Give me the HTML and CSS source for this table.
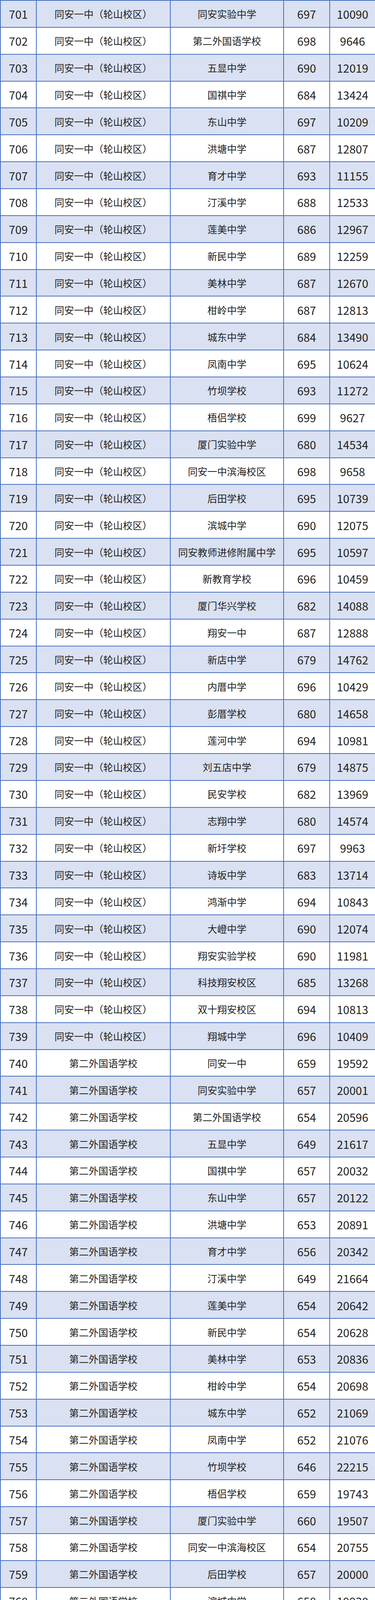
FILE: index.html
```html
<!DOCTYPE html>
<html lang="zh-CN">
<head>
<meta charset="utf-8">
<title>录取名单</title>
<link rel="stylesheet" href="styles.css">
</head>
<body>
<table class="sheet">
<colgroup>
<col class="c-no"><col class="c-from"><col class="c-to"><col class="c-score"><col class="c-rank">
</colgroup>
<tbody>
<tr><td>701</td><td>同安一中（轮山校区）</td><td>同安实验中学</td><td>697</td><td>10090</td></tr>
<tr><td>702</td><td>同安一中（轮山校区）</td><td>第二外国语学校</td><td>698</td><td>9646</td></tr>
<tr><td>703</td><td>同安一中（轮山校区）</td><td>五显中学</td><td>690</td><td>12019</td></tr>
<tr><td>704</td><td>同安一中（轮山校区）</td><td>国祺中学</td><td>684</td><td>13424</td></tr>
<tr><td>705</td><td>同安一中（轮山校区）</td><td>东山中学</td><td>697</td><td>10209</td></tr>
<tr><td>706</td><td>同安一中（轮山校区）</td><td>洪塘中学</td><td>687</td><td>12807</td></tr>
<tr><td>707</td><td>同安一中（轮山校区）</td><td>育才中学</td><td>693</td><td>11155</td></tr>
<tr><td>708</td><td>同安一中（轮山校区）</td><td>汀溪中学</td><td>688</td><td>12533</td></tr>
<tr><td>709</td><td>同安一中（轮山校区）</td><td>莲美中学</td><td>686</td><td>12967</td></tr>
<tr><td>710</td><td>同安一中（轮山校区）</td><td>新民中学</td><td>689</td><td>12259</td></tr>
<tr><td>711</td><td>同安一中（轮山校区）</td><td>美林中学</td><td>687</td><td>12670</td></tr>
<tr><td>712</td><td>同安一中（轮山校区）</td><td>柑岭中学</td><td>687</td><td>12813</td></tr>
<tr><td>713</td><td>同安一中（轮山校区）</td><td>城东中学</td><td>684</td><td>13490</td></tr>
<tr><td>714</td><td>同安一中（轮山校区）</td><td>凤南中学</td><td>695</td><td>10624</td></tr>
<tr><td>715</td><td>同安一中（轮山校区）</td><td>竹坝学校</td><td>693</td><td>11272</td></tr>
<tr><td>716</td><td>同安一中（轮山校区）</td><td>梧侣学校</td><td>699</td><td>9627</td></tr>
<tr><td>717</td><td>同安一中（轮山校区）</td><td>厦门实验中学</td><td>680</td><td>14534</td></tr>
<tr><td>718</td><td>同安一中（轮山校区）</td><td>同安一中滨海校区</td><td>698</td><td>9658</td></tr>
<tr><td>719</td><td>同安一中（轮山校区）</td><td>后田学校</td><td>695</td><td>10739</td></tr>
<tr><td>720</td><td>同安一中（轮山校区）</td><td>滨城中学</td><td>690</td><td>12075</td></tr>
<tr><td>721</td><td>同安一中（轮山校区）</td><td>同安教师进修附属中学</td><td>695</td><td>10597</td></tr>
<tr><td>722</td><td>同安一中（轮山校区）</td><td>新教育学校</td><td>696</td><td>10459</td></tr>
<tr><td>723</td><td>同安一中（轮山校区）</td><td>厦门华兴学校</td><td>682</td><td>14088</td></tr>
<tr><td>724</td><td>同安一中（轮山校区）</td><td>翔安一中</td><td>687</td><td>12888</td></tr>
<tr><td>725</td><td>同安一中（轮山校区）</td><td>新店中学</td><td>679</td><td>14762</td></tr>
<tr><td>726</td><td>同安一中（轮山校区）</td><td>内厝中学</td><td>696</td><td>10429</td></tr>
<tr><td>727</td><td>同安一中（轮山校区）</td><td>彭厝学校</td><td>680</td><td>14658</td></tr>
<tr><td>728</td><td>同安一中（轮山校区）</td><td>莲河中学</td><td>694</td><td>10981</td></tr>
<tr><td>729</td><td>同安一中（轮山校区）</td><td>刘五店中学</td><td>679</td><td>14875</td></tr>
<tr><td>730</td><td>同安一中（轮山校区）</td><td>民安学校</td><td>682</td><td>13969</td></tr>
<tr><td>731</td><td>同安一中（轮山校区）</td><td>志翔中学</td><td>680</td><td>14574</td></tr>
<tr><td>732</td><td>同安一中（轮山校区）</td><td>新圩学校</td><td>697</td><td>9963</td></tr>
<tr><td>733</td><td>同安一中（轮山校区）</td><td>诗坂中学</td><td>683</td><td>13714</td></tr>
<tr><td>734</td><td>同安一中（轮山校区）</td><td>鸿渐中学</td><td>694</td><td>10843</td></tr>
<tr><td>735</td><td>同安一中（轮山校区）</td><td>大嶝中学</td><td>690</td><td>12074</td></tr>
<tr><td>736</td><td>同安一中（轮山校区）</td><td>翔安实验学校</td><td>690</td><td>11981</td></tr>
<tr><td>737</td><td>同安一中（轮山校区）</td><td>科技翔安校区</td><td>685</td><td>13268</td></tr>
<tr><td>738</td><td>同安一中（轮山校区）</td><td>双十翔安校区</td><td>694</td><td>10813</td></tr>
<tr><td>739</td><td>同安一中（轮山校区）</td><td>翔城中学</td><td>696</td><td>10409</td></tr>
<tr><td>740</td><td>第二外国语学校</td><td>同安一中</td><td>659</td><td>19592</td></tr>
<tr><td>741</td><td>第二外国语学校</td><td>同安实验中学</td><td>657</td><td>20001</td></tr>
<tr><td>742</td><td>第二外国语学校</td><td>第二外国语学校</td><td>654</td><td>20596</td></tr>
<tr><td>743</td><td>第二外国语学校</td><td>五显中学</td><td>649</td><td>21617</td></tr>
<tr><td>744</td><td>第二外国语学校</td><td>国祺中学</td><td>657</td><td>20032</td></tr>
<tr><td>745</td><td>第二外国语学校</td><td>东山中学</td><td>657</td><td>20122</td></tr>
<tr><td>746</td><td>第二外国语学校</td><td>洪塘中学</td><td>653</td><td>20891</td></tr>
<tr><td>747</td><td>第二外国语学校</td><td>育才中学</td><td>656</td><td>20342</td></tr>
<tr><td>748</td><td>第二外国语学校</td><td>汀溪中学</td><td>649</td><td>21664</td></tr>
<tr><td>749</td><td>第二外国语学校</td><td>莲美中学</td><td>654</td><td>20642</td></tr>
<tr><td>750</td><td>第二外国语学校</td><td>新民中学</td><td>654</td><td>20628</td></tr>
<tr><td>751</td><td>第二外国语学校</td><td>美林中学</td><td>653</td><td>20836</td></tr>
<tr><td>752</td><td>第二外国语学校</td><td>柑岭中学</td><td>654</td><td>20698</td></tr>
<tr><td>753</td><td>第二外国语学校</td><td>城东中学</td><td>652</td><td>21069</td></tr>
<tr><td>754</td><td>第二外国语学校</td><td>凤南中学</td><td>652</td><td>21076</td></tr>
<tr><td>755</td><td>第二外国语学校</td><td>竹坝学校</td><td>646</td><td>22215</td></tr>
<tr><td>756</td><td>第二外国语学校</td><td>梧侣学校</td><td>659</td><td>19743</td></tr>
<tr><td>757</td><td>第二外国语学校</td><td>厦门实验中学</td><td>660</td><td>19507</td></tr>
<tr><td>758</td><td>第二外国语学校</td><td>同安一中滨海校区</td><td>654</td><td>20755</td></tr>
<tr><td>759</td><td>第二外国语学校</td><td>后田学校</td><td>657</td><td>20000</td></tr>
<tr><td>760</td><td>第二外国语学校</td><td>滨城中学</td><td>658</td><td>19930</td></tr>
<tr><td>761</td><td>第二外国语学校</td><td>同安教师进修附属中学</td><td>657</td><td>20082</td></tr>
<tr><td>762</td><td>第二外国语学校</td><td>新教育学校</td><td>654</td><td>20707</td></tr>
<tr><td>763</td><td>第二外国语学校</td><td>厦门华兴学校</td><td>660</td><td>19513</td></tr>
<tr><td>764</td><td>第二外国语学校</td><td>翔安一中</td><td>655</td><td>20469</td></tr>
<tr><td>765</td><td>第二外国语学校</td><td>新店中学</td><td>649</td><td>21651</td></tr>
<tr><td>766</td><td>第二外国语学校</td><td>内厝中学</td><td>655</td><td>20474</td></tr>
<tr><td>767</td><td>第二外国语学校</td><td>彭厝学校</td><td>652</td><td>20993</td></tr>
<tr><td>768</td><td>第二外国语学校</td><td>莲河中学</td><td>653</td><td>20815</td></tr>
<tr><td>769</td><td>第二外国语学校</td><td>刘五店中学</td><td>641</td><td>23225</td></tr>
<tr><td>770</td><td>第二外国语学校</td><td>民安学校</td><td>651</td><td>21304</td></tr>
<tr><td>771</td><td>第二外国语学校</td><td>志翔中学</td><td>654</td><td>20730</td></tr>
<tr><td>772</td><td>第二外国语学校</td><td>新圩学校</td><td>656</td><td>20243</td></tr>
<tr><td>773</td><td>第二外国语学校</td><td>诗坂中学</td><td>648</td><td>21815</td></tr>
<tr><td>774</td><td>第二外国语学校</td><td>鸿渐中学</td><td>654</td><td>20714</td></tr>
<tr><td>775</td><td>第二外国语学校</td><td>大嶝中学</td><td>655</td><td>20405</td></tr>
<tr><td>776</td><td>第二外国语学校</td><td>翔安实验学校</td><td>653</td><td>20783</td></tr>
<tr><td>777</td><td>第二外国语学校</td><td>科技翔安校区</td><td>656</td><td>20290</td></tr>
<tr><td>778</td><td>第二外国语学校</td><td>双十翔安校区</td><td>656</td><td>20336</td></tr>
<tr><td>779</td><td>第二外国语学校</td><td>翔城中学</td><td>653</td><td>20893</td></tr>
<tr><td>780</td><td>同安一中（滨海校区）</td><td>同安一中</td><td>695</td><td>10663</td></tr>
<tr><td>781</td><td>同安一中（滨海校区）</td><td>同安实验中学</td><td>694</td><td>10918</td></tr>
<tr><td>782</td><td>同安一中（滨海校区）</td><td>第二外国语学校</td><td>695</td><td>10513</td></tr>
<tr><td>783</td><td>同安一中（滨海校区）</td><td>五显中学</td><td>681</td><td>14210</td></tr>
<tr><td>784</td><td>同安一中（滨海校区）</td><td>国祺中学</td><td>690</td><td>11903</td></tr>
<tr><td>785</td><td>同安一中（滨海校区）</td><td>东山中学</td><td>691</td><td>11683</td></tr>
<tr><td>786</td><td>同安一中（滨海校区）</td><td>洪塘中学</td><td>679</td><td>14893</td></tr>
<tr><td>787</td><td>同安一中（滨海校区）</td><td>育才中学</td><td>683</td><td>13743</td></tr>
<tr><td>788</td><td>同安一中（滨海校区）</td><td>汀溪中学</td><td>679</td><td>14848</td></tr>
<tr><td>789</td><td>同安一中（滨海校区）</td><td>莲美中学</td><td>680</td><td>14646</td></tr>
<tr><td>790</td><td>同安一中（滨海校区）</td><td>新民中学</td><td>679</td><td>14884</td></tr>
<tr><td>791</td><td>同安一中（滨海校区）</td><td>美林中学</td><td>681</td><td>14280</td></tr>
<tr><td>792</td><td>同安一中（滨海校区）</td><td>柑岭中学</td><td>679</td><td>14902</td></tr>
<tr><td>793</td><td>同安一中（滨海校区）</td><td>城东中学</td><td>681</td><td>14236</td></tr>
<tr><td>794</td><td>同安一中（滨海校区）</td><td>凤南中学</td><td>686</td><td>13169</td></tr>
<tr><td>795</td><td>同安一中（滨海校区）</td><td>竹坝学校</td><td>681</td><td>14252</td></tr>
<tr><td>796</td><td>同安一中（滨海校区）</td><td>梧侣学校</td><td>692</td><td>11540</td></tr>
<tr><td>797</td><td>同安一中（滨海校区）</td><td>厦门实验中学</td><td>686</td><td>12959</td></tr>
<tr><td>798</td><td>同安一中（滨海校区）</td><td>同安一中滨海校区</td><td>700</td><td>9339</td></tr>
<tr><td>799</td><td>同安一中（滨海校区）</td><td>后田学校</td><td>692</td><td>11548</td></tr>
<tr><td>800</td><td>同安一中（滨海校区）</td><td>滨城中学</td><td>698</td><td>9942</td></tr>
</tbody>
</table>
</body>
</html>
```

FILE: styles.css
```css
html, body {
  margin: 0;
  padding: 0;
  background: #ffffff;
}

.sheet {
  width: 960px;
  border-collapse: collapse;
  border-spacing: 0;
  table-layout: fixed;
  font-family: "Noto Sans CJK SC", "Microsoft YaHei", sans-serif;
  font-size: 25px;
  color: #222222;
}

.c-no { width: 92px; }
.c-from { width: 343px; }
.c-to { width: 290px; }
.c-score { width: 118px; }
.c-rank { width: 117px; }

.sheet tr {
  height: 68.86px;
}

.sheet tr:nth-child(odd) {
  background: #d9e1f2;
}

.sheet td {
  box-sizing: border-box;
  height: 68.86px;
  border: 2px solid #4a70c2;
  padding: 0;
  text-align: center;
  vertical-align: middle;
  white-space: nowrap;
  line-height: 32px;
}

/* numeric columns: taller figures, as in the source sheet */
.sheet td:nth-child(1),
.sheet td:nth-child(4),
.sheet td:nth-child(5) {
  font-size: 29px;
}
```
